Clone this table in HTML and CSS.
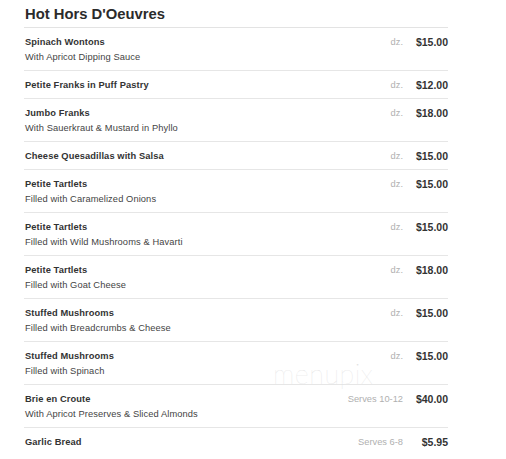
FILE: index.html
```html
<!DOCTYPE html>
<html>
<head>
<meta charset="utf-8">
<link rel="stylesheet" href="styles.css">
</head>
<body>
<div class="menu">
  <h2 class="title">Hot Hors D'Oeuvres</h2>
  <div class="item">
    <div class="info"><div class="name">Spinach Wontons</div><div class="desc">With Apricot Dipping Sauce</div></div>
    <div class="unit">dz.</div><div class="price">$15.00</div>
  </div>
  <div class="item">
    <div class="info"><div class="name">Petite Franks in Puff Pastry</div></div>
    <div class="unit">dz.</div><div class="price">$12.00</div>
  </div>
  <div class="item">
    <div class="info"><div class="name">Jumbo Franks</div><div class="desc">With Sauerkraut &amp; Mustard in Phyllo</div></div>
    <div class="unit">dz.</div><div class="price">$18.00</div>
  </div>
  <div class="item">
    <div class="info"><div class="name">Cheese Quesadillas with Salsa</div></div>
    <div class="unit">dz.</div><div class="price">$15.00</div>
  </div>
  <div class="item">
    <div class="info"><div class="name">Petite Tartlets</div><div class="desc">Filled with Caramelized Onions</div></div>
    <div class="unit">dz.</div><div class="price">$15.00</div>
  </div>
  <div class="item">
    <div class="info"><div class="name">Petite Tartlets</div><div class="desc">Filled with Wild Mushrooms &amp; Havarti</div></div>
    <div class="unit">dz.</div><div class="price">$15.00</div>
  </div>
  <div class="item">
    <div class="info"><div class="name">Petite Tartlets</div><div class="desc">Filled with Goat Cheese</div></div>
    <div class="unit">dz.</div><div class="price">$18.00</div>
  </div>
  <div class="item">
    <div class="info"><div class="name">Stuffed Mushrooms</div><div class="desc">Filled with Breadcrumbs &amp; Cheese</div></div>
    <div class="unit">dz.</div><div class="price">$15.00</div>
  </div>
  <div class="item">
    <div class="info"><div class="name">Stuffed Mushrooms</div><div class="desc">Filled with Spinach</div></div>
    <div class="unit">dz.</div><div class="price">$15.00</div>
  </div>
  <div class="item">
    <div class="info"><div class="name">Brie en Croute</div><div class="desc">With Apricot Preserves &amp; Sliced Almonds</div></div>
    <div class="unit">Serves 10-12</div><div class="price">$40.00</div>
  </div>
  <div class="item last">
    <div class="info"><div class="name">Garlic Bread</div></div>
    <div class="unit">Serves 6-8</div><div class="price">$5.95</div>
  </div>
  <div class="watermark">menupix</div>
</div>
</body>
</html>
```
FILE: styles.css
```css
html, body {
  margin: 0;
  padding: 0;
  background: #ffffff;
}
body {
  font-family: "Liberation Sans", Arial, sans-serif;
  color: #333333;
}
.menu {
  position: relative;
  width: 424px;
  margin-left: 24px;
}
.title {
  margin: 0;
  padding: 5px 0 0 1px;
  height: 22px;
  font-size: 14.8px;
  line-height: 18px;
  font-weight: 700;
  color: #2b2b2b;
  border-bottom: 1px solid #e3e3e3;
}
.item {
  display: flex;
  align-items: flex-start;
  padding: 7px 0 5px 1px;
  border-bottom: 1px solid #e6e6e6;
}
.item.last {
  border-bottom: none;
}
.info {
  flex: 1;
}
.name {
  font-size: 9.3px;
  line-height: 15px;
  font-weight: 700;
  color: #333333;
  letter-spacing: 0.1px;
}
.desc {
  font-size: 9.3px;
  line-height: 15px;
  color: #444444;
  letter-spacing: 0.1px;
}
.unit {
  font-size: 9.3px;
  line-height: 15px;
  color: #b0b0b0;
  margin-right: 12px;
}
.price {
  width: 33px;
  text-align: right;
  font-size: 10.5px;
  line-height: 15px;
  font-weight: 700;
  color: #333333;
}
.watermark {
  position: absolute;
  left: 249px;
  top: 359px;
  font-family: Lato, "DejaVu Sans", sans-serif;
  font-weight: 100;
  font-size: 27px;
  line-height: 30px;
  color: #e0e0e0;
  letter-spacing: 0.5px;
}
```
